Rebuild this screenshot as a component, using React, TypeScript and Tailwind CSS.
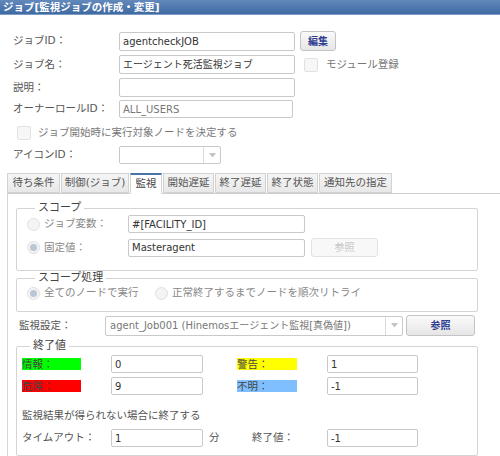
import React from 'react';

const font = "font-['DejaVu_Sans','Noto_Sans_CJK_JP',sans-serif]";

const TextBox = ({ value, className = '', muted = false }: { value?: string; className?: string; muted?: boolean }) => (
  <div
    className={`flex items-center px-[3px] border border-[#c9c9c9] rounded-[2px] bg-white text-[10px] ${
      muted ? 'text-[#777]' : 'text-[#333]'
    } ${className}`}
  >
    {value}
  </div>
);

const Check = ({ className = '' }: { className?: string }) => (
  <div className={`w-[14px] h-[14px] border border-[#e2e2e2] rounded-[2px] bg-[#f7f7f7] ${className}`} />
);

const Radio = ({ checked = false }: { checked?: boolean }) => (
  <div className="w-[13px] h-[13px] rounded-full border border-[#e0e0e0] bg-[#f4f4f4] flex items-center justify-center">
    {checked && <div className="w-[7px] h-[7px] rounded-full bg-[#b9c6d6]" />}
  </div>
);

const Select = ({ value, className = '' }: { value?: string; className?: string }) => (
  <div className={`flex border border-[#c9c9c9] rounded-[2px] bg-white ${className}`}>
    <div className="flex-1 flex items-center px-[4px] text-[10px] text-[#777] whitespace-nowrap overflow-hidden">{value}</div>
    <div className="w-[17px] border-l border-[#dcdcdc] flex items-center justify-center">
      <svg width="7" height="5" viewBox="0 0 7 5">
        <path d="M0 0 L7 0 L3.5 4.5 Z" fill="#c4c4c4" />
      </svg>
    </div>
  </div>
);

const Group = ({ title, className = '', children }: { title: string; className?: string; children: React.ReactNode }) => (
  <fieldset className={`border border-[#d4d4d4] rounded-[2px] ${className}`}>
    <legend className="ml-[8px] px-[3px] text-[11px] text-[#444] leading-[12px]">{title}</legend>
    {children}
  </fieldset>
);

// tab label + width in px
const tabs: [string, string][] = [
  ['待ち条件', 'w-[53px]'],
  ['制御(ジョブ)', 'w-[68px]'],
  ['監視', 'w-[32px]'],
  ['開始遅延', 'w-[51px]'],
  ['終了遅延', 'w-[51px]'],
  ['終了状態', 'w-[51px]'],
  ['通知先の指定', 'w-[73px]'],
];

export default function App() {
  return (
    <div className={`w-[500px] h-[456px] bg-white overflow-hidden ${font} text-[#555] text-[10.5px]`}>
      {/* Title */}
      <div className="h-[15px] bg-gradient-to-b from-[#6389bb] to-[#3f6aa2] border-b border-[#7d9dc7] flex items-center pl-[3px]">
        <span className="text-white font-bold text-[10.5px] leading-none">ジョブ[監視ジョブの作成・変更]</span>
      </div>

      {/* Header form */}
      <div className="pl-[13px]">
        <div className="flex items-center h-[20px] mt-[16px]">
          <div className="w-[106px]">ジョブID：</div>
          <TextBox value="agentcheckJOB" className="w-[176px] h-[19px]" />
          <button className="ml-[5px] w-[36px] h-[20px] border border-[#c3c3c3] rounded-[3px] bg-gradient-to-b from-[#fafafa] to-[#e6e6e6] text-[#2f3d8f] font-bold text-[10px]">
            編集
          </button>
        </div>
        <div className="flex items-center h-[19px] mt-[4px]">
          <div className="w-[106px]">ジョブ名：</div>
          <TextBox value="エージェント死活監視ジョブ" className="w-[176px] h-[19px]" />
          <Check className="ml-[9px]" />
          <span className="ml-[8px] text-[#777]">モジュール登録</span>
        </div>
        <div className="flex items-center h-[19px] mt-[4px]">
          <div className="w-[106px]">説明：</div>
          <TextBox className="w-[176px] h-[19px]" />
        </div>
        <div className="flex items-center h-[18px] mt-[3px]">
          <div className="w-[106px]">オーナーロールID：</div>
          <TextBox value="ALL_USERS" muted className="w-[174px] h-[18px]" />
        </div>
        <div className="flex items-center h-[14px] mt-[8px] pl-[4px]">
          <Check />
          <span className="ml-[7px] text-[#777]">ジョブ開始時に実行対象ノードを決定する</span>
        </div>
        <div className="flex items-center h-[18px] mt-[6px]">
          <div className="w-[106px]">アイコンID：</div>
          <Select className="w-[102px] h-[18px]" />
        </div>
      </div>

      {/* Tabs */}
      <div className="mt-[9px] pl-[7px]">
        <div className="flex gap-[1px] h-[21px] border-b border-[#cfcfcf]">
          {tabs.map(([t, w]) => {
            const active = t === '監視';
            return (
              <div
                key={t}
                className={`${w} flex items-center justify-center border border-[#d2d2d2] text-[10.5px] whitespace-nowrap ${
                  active
                    ? 'bg-white border-t-2 border-t-[#4a73a8] border-b-white -mb-px text-[#444]'
                    : 'bg-gradient-to-b from-[#f5f5f5] to-[#e8e8e8] text-[#555]'
                }`}
              >
                {t}
              </div>
            );
          })}
        </div>

        {/* Panel */}
        <div className="border-l border-[#d6d6d6] pl-[8px] pt-[8px] pb-[10px]">
          <Group title="スコープ" className="w-[462px] h-[69px] px-[10px]">
            <div className="flex items-center h-[18px] mt-[1px]">
              <Radio />
              <span className="ml-[4px] w-[84px] text-[#888]">ジョブ変数：</span>
              <TextBox value="#[FACILITY_ID]" className="w-[177px] h-[18px]" />
            </div>
            <div className="flex items-center h-[19px] mt-[5px]">
              <Radio checked />
              <span className="ml-[4px] w-[84px] text-[#888]">固定値：</span>
              <TextBox value="Masteragent" className="w-[177px] h-[18px]" />
              <button className="ml-[6px] w-[67px] h-[19px] border border-[#e2e2e2] rounded-[3px] bg-[#f8f8f8] text-[#c6c6c6] text-[10px]">
                参照
              </button>
            </div>
          </Group>

          <Group title="スコープ処理" className="w-[462px] h-[40px] mt-[1px] px-[10px]">
            <div className="flex items-center h-[16px] mt-[1px]">
              <Radio checked />
              <span className="ml-[4px] w-[111px] text-[#888]">全てのノードで実行</span>
              <Radio />
              <span className="ml-[4px] text-[#888]">正常終了するまでノードを順次リトライ</span>
            </div>
          </Group>

          <div className="flex items-center h-[21px] mt-[3px] pl-[3px]">
            <span className="w-[86px]">監視設定：</span>
            <Select value="agent_Job001 (Hinemosエージェント監視[真偽値])" className="w-[298px] h-[20px]" />
            <button className="ml-[3px] w-[69px] h-[21px] border border-[#c3c3c3] rounded-[3px] bg-gradient-to-b from-[#fafafa] to-[#e6e6e6] text-[#2f3d8f] font-bold text-[10px]">
              参照
            </button>
          </div>

          <Group title="終了値" className="w-[462px] h-[116px] mt-[4px] px-[5px]">
            <div className="flex items-center h-[18px] mt-[3px]">
              <span className="w-[59px] h-[12px] leading-[12px] bg-[#00ff00] text-[#444]">情報：</span>
              <TextBox value="0" className="ml-[30px] w-[92px] h-[18px]" />
              <span className="ml-[34px] w-[60px] h-[12px] leading-[12px] bg-[#ffff00] text-[#444]">警告：</span>
              <TextBox value="1" className="ml-[30px] w-[91px] h-[18px]" />
            </div>
            <div className="flex items-center h-[18px] mt-[4px]">
              <span className="w-[59px] h-[12px] leading-[12px] bg-[#ff0000] text-[#444]">危険：</span>
              <TextBox value="9" className="ml-[30px] w-[92px] h-[18px]" />
              <span className="ml-[34px] w-[60px] h-[12px] leading-[12px] bg-[#80bfff] text-[#444]">不明：</span>
              <TextBox value="-1" className="ml-[30px] w-[91px] h-[18px]" />
            </div>
            <div className="h-[14px] mt-[13px] leading-[14px]">監視結果が得られない場合に終了する</div>
            <div className="flex items-center h-[18px] mt-[7px]">
              <span className="w-[89px]">タイムアウト：</span>
              <TextBox value="1" className="w-[92px] h-[18px]" />
              <span className="ml-[6px] w-[43px]">分</span>
              <span className="w-[75px]">終了値：</span>
              <TextBox value="-1" className="w-[91px] h-[18px]" />
            </div>
          </Group>
        </div>
      </div>
    </div>
  );
}
